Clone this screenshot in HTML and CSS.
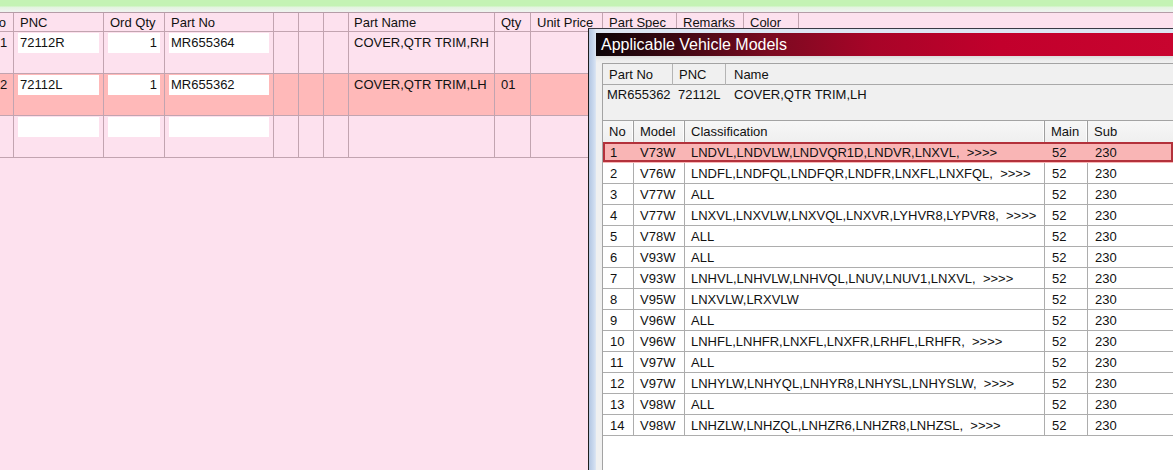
FILE: index.html
```html
<!DOCTYPE html>
<html>
<head>
<meta charset="utf-8">
<title>Order Parts</title>
<link rel="stylesheet" href="styles.css">
</head>
<body>
<div class="app">
  <div class="strip"></div>
  <div class="sheet">
    <div class="row hrow">
      <div class="c c-no"><span>No</span></div>
      <div class="c">PNC</div>
      <div class="c">Ord Qty</div>
      <div class="c">Part No</div>
      <div class="c"></div>
      <div class="c"></div>
      <div class="c"></div>
      <div class="c pn">Part Name</div>
      <div class="c">Qty</div>
      <div class="c">Unit Price</div>
      <div class="c">Part Spec</div>
      <div class="c">Remarks</div>
      <div class="c">Color</div>
      <div class="c last"></div>
    </div>
    <div class="row drow">
      <div class="c c-no">1</div>
      <div class="c"><div class="box">72112R</div></div>
      <div class="c"><div class="box num">1</div></div>
      <div class="c"><div class="box">MR655364</div></div>
      <div class="c"></div>
      <div class="c"></div>
      <div class="c"></div>
      <div class="c pn txt">COVER,QTR TRIM,RH</div>
      <div class="c txt"></div>
      <div class="c"></div>
      <div class="c"></div>
      <div class="c"></div>
      <div class="c"></div>
      <div class="c last"></div>
    </div>
    <div class="row drow sel">
      <div class="c c-no">2</div>
      <div class="c"><div class="box">72112L</div></div>
      <div class="c"><div class="box num">1</div></div>
      <div class="c"><div class="box">MR655362</div></div>
      <div class="c"></div>
      <div class="c"></div>
      <div class="c"></div>
      <div class="c pn txt">COVER,QTR TRIM,LH</div>
      <div class="c txt">01</div>
      <div class="c"></div>
      <div class="c"></div>
      <div class="c"></div>
      <div class="c"></div>
      <div class="c last"></div>
    </div>
    <div class="row drow">
      <div class="c c-no"></div>
      <div class="c"><div class="box"></div></div>
      <div class="c"><div class="box num"></div></div>
      <div class="c"><div class="box"></div></div>
      <div class="c"></div>
      <div class="c"></div>
      <div class="c"></div>
      <div class="c pn txt"></div>
      <div class="c txt"></div>
      <div class="c"></div>
      <div class="c"></div>
      <div class="c"></div>
      <div class="c"></div>
      <div class="c last"></div>
    </div>
  </div>

  <div class="dlg">
    <div class="titlebar">Applicable Vehicle Models</div>
    <div class="dlg-body">
      <div class="info">
        <div class="info-head">
          <div class="ih">Part No</div>
          <div class="ih">PNC</div>
          <div class="ih last">Name</div>
        </div>
        <div class="info-vals">
          <div class="iv v1">MR655362</div>
          <div class="iv v2">72112L</div>
          <div class="iv v3">COVER,QTR TRIM,LH</div>
        </div>
      </div>
      <div class="list">
        <div class="lrow lhead">
          <div class="lc">No</div>
          <div class="lc">Model</div>
          <div class="lc">Classification</div>
          <div class="lc">Main</div>
          <div class="lc last">Sub</div>
        </div>
        <div class="lrow sel"><div class="lc">1</div><div class="lc">V73W</div><div class="lc">LNDVL,LNDVLW,LNDVQR1D,LNDVR,LNXVL,  &gt;&gt;&gt;&gt;</div><div class="lc">52</div><div class="lc last">230</div></div>
        <div class="lrow"><div class="lc">2</div><div class="lc">V76W</div><div class="lc">LNDFL,LNDFQL,LNDFQR,LNDFR,LNXFL,LNXFQL,  &gt;&gt;&gt;&gt;</div><div class="lc">52</div><div class="lc last">230</div></div>
        <div class="lrow"><div class="lc">3</div><div class="lc">V77W</div><div class="lc">ALL</div><div class="lc">52</div><div class="lc last">230</div></div>
        <div class="lrow"><div class="lc">4</div><div class="lc">V77W</div><div class="lc">LNXVL,LNXVLW,LNXVQL,LNXVR,LYHVR8,LYPVR8,  &gt;&gt;&gt;&gt;</div><div class="lc">52</div><div class="lc last">230</div></div>
        <div class="lrow"><div class="lc">5</div><div class="lc">V78W</div><div class="lc">ALL</div><div class="lc">52</div><div class="lc last">230</div></div>
        <div class="lrow"><div class="lc">6</div><div class="lc">V93W</div><div class="lc">ALL</div><div class="lc">52</div><div class="lc last">230</div></div>
        <div class="lrow"><div class="lc">7</div><div class="lc">V93W</div><div class="lc">LNHVL,LNHVLW,LNHVQL,LNUV,LNUV1,LNXVL,  &gt;&gt;&gt;&gt;</div><div class="lc">52</div><div class="lc last">230</div></div>
        <div class="lrow"><div class="lc">8</div><div class="lc">V95W</div><div class="lc">LNXVLW,LRXVLW</div><div class="lc">52</div><div class="lc last">230</div></div>
        <div class="lrow"><div class="lc">9</div><div class="lc">V96W</div><div class="lc">ALL</div><div class="lc">52</div><div class="lc last">230</div></div>
        <div class="lrow"><div class="lc">10</div><div class="lc">V96W</div><div class="lc">LNHFL,LNHFR,LNXFL,LNXFR,LRHFL,LRHFR,  &gt;&gt;&gt;&gt;</div><div class="lc">52</div><div class="lc last">230</div></div>
        <div class="lrow"><div class="lc">11</div><div class="lc">V97W</div><div class="lc">ALL</div><div class="lc">52</div><div class="lc last">230</div></div>
        <div class="lrow"><div class="lc">12</div><div class="lc">V97W</div><div class="lc">LNHYLW,LNHYQL,LNHYR8,LNHYSL,LNHYSLW,  &gt;&gt;&gt;&gt;</div><div class="lc">52</div><div class="lc last">230</div></div>
        <div class="lrow"><div class="lc">13</div><div class="lc">V98W</div><div class="lc">ALL</div><div class="lc">52</div><div class="lc last">230</div></div>
        <div class="lrow"><div class="lc">14</div><div class="lc">V98W</div><div class="lc">LNHZLW,LNHZQL,LNHZR6,LNHZR8,LNHZSL,  &gt;&gt;&gt;&gt;</div><div class="lc">52</div><div class="lc last">230</div></div>
      </div>
    </div>
  </div>
</div>
</body>
</html>
```

FILE: styles.css
```css
* { box-sizing: border-box; }
html, body { margin: 0; padding: 0; }
body {
  width: 1173px;
  height: 470px;
  overflow: hidden;
  background: #fde1ee;
  font-family: "Liberation Sans", Arial, sans-serif;
  font-size: 13px;
  color: #111;
}
.app { position: relative; width: 1173px; height: 470px; overflow: hidden; }

.strip {
  height: 12px;
  background: linear-gradient(#c4f3b4 0, #c4f3b4 6px, #e3f4df 7px, #eef3ee 11px);
}

.sheet { display: flex; flex-direction: column; }
.row {
  display: grid;
  grid-template-columns: 14px 90px 61px 109px 25px 25px 25px 146px 36px 72px 74px 67px 55px 1fr;
  border-bottom: 1px solid #c2a4b0;
}
.hrow {
  height: 20px;
  border-top: 1px solid #b59ca7;
  line-height: 19px;
}
.drow { height: 42px; }
.drow.sel { background: #ffb9b9; }
.c {
  border-right: 1px solid #c2a4b0;
  padding-left: 6px;
  white-space: nowrap;
  overflow: hidden;
}
.c.last { border-right: none; }
.c.pn { padding-left: 5px; }
.c-no {
  padding: 0 7px 0 0;
  text-align: right;
  overflow: hidden;
  direction: rtl;
}
.c-no span { direction: ltr; }
.drow .c-no { line-height: 20px; padding-top: 1px; direction: ltr; }
.drow .c { padding-left: 4px; }
.drow .c.txt { padding-left: 6px; line-height: 20px; padding-top: 1px; }
.drow .c.pn { padding-left: 5px; }
.drow .c-no { padding-left: 0; }
.box {
  margin-top: 1px;
  margin-right: 4px;
  height: 20px;
  line-height: 20px;
  background: #fff;
  padding: 0 3px 0 2px;
}
.box.num { text-align: right; }

/* dialog window */
.dlg {
  position: absolute;
  left: 588px;
  top: 28px;
  right: 0;
  bottom: 0;
  border-left: 1px solid #1e1e1e;
  border-top: 1px solid #3a3a44;
  background: linear-gradient(90deg, #b3c6e2 0, #cddbef 5px, #dde6f3 7px);
  padding: 4px 0 0 7px;
  display: flex;
  flex-direction: column;
}
.titlebar {
  height: 23px;
  line-height: 23px;
  padding-left: 5px;
  color: #fff;
  font-size: 16px;
  background: linear-gradient(90deg, #0c0407 0%, #3d0712 14%, #7a0a20 30%, #a80428 48%, #c2002c 70%, #c8042f 100%);
  white-space: nowrap;
}
.dlg-body {
  flex: 1;
  padding: 7px 0 0 6px;
  display: flex;
  flex-direction: column;
  background: linear-gradient(#dcdcdc 0, #ececec 4px, #f0f0f0 7px);
}
.info {
  border-top: 1px solid #a3a3a3;
  border-left: 1px solid #a3a3a3;
  height: 57px;
  background: #f0f0f0;
}
.info-head {
  display: grid;
  grid-template-columns: 70px 53px 1fr;
  height: 21px;
  line-height: 21px;
  border-bottom: 1px solid #a9a9a9;
}
.ih {
  border-right: 1px solid #b4b4b4;
  padding-left: 6px;
}
.ih.last { border-right: none; padding-left: 8px; }
.info-vals {
  display: grid;
  grid-template-columns: 70px 53px 1fr;
  line-height: 20px;
  height: 20px;
}
.iv { white-space: nowrap; }
.v1 { padding-left: 4px; }
.v2 { padding-left: 5px; }
.v3 { padding-left: 8px; }

.list {
  flex: 1;
  border-top: 1px solid #a3a3a3;
  border-left: 1px solid #a3a3a3;
  background: #fff;
}
.lrow {
  display: grid;
  grid-template-columns: 31px 51px 360px 43px 1fr;
  height: 21px;
  line-height: 21px;
  border-bottom: 1px solid #adadad;
}
.lhead {
  background: linear-gradient(#f7f7f7, #efefef);
  border-bottom: none;
  line-height: 21px;
}
.lc {
  border-right: 1px solid #adadad;
  padding-left: 6px;
  white-space: pre;
  overflow: hidden;
}
.lc:first-child { padding-left: 7px; }
.lc:nth-child(4), .lc:nth-child(5) { padding-left: 7px; }
.lc.last { border-right: none; }
.lhead .lc { border-right: 1px solid #9f9f9f; box-shadow: inset -1px 0 0 #fdfdfd; padding-left: 6px; }
.lhead .lc.last { border-right: none; box-shadow: none; }
.lrow.sel {
  background: #f9b5b5;
  box-shadow: inset 0 0 0 2px #b3313b;
  border-bottom-color: transparent;
}
.lrow.sel .lc { border-right-color: transparent; }
```
